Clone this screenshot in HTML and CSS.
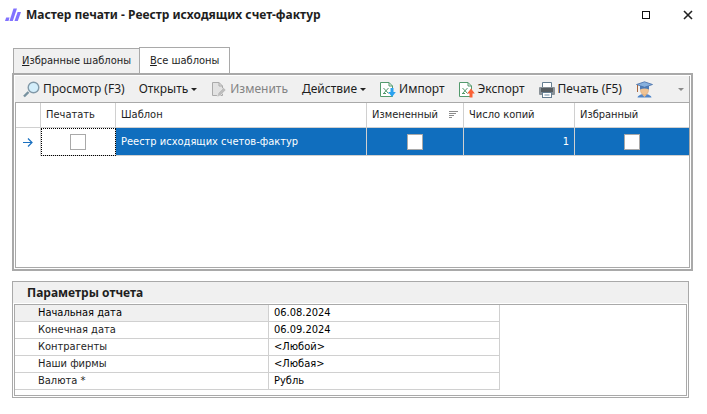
FILE: index.html
```html
<!DOCTYPE html>
<html lang="ru">
<head>
<meta charset="utf-8">
<title>Мастер печати - Реестр исходящих счет-фактур</title>
<link rel="stylesheet" href="styles.css">
</head>
<body>
<header class="titlebar">
  <svg class="logo" width="16" height="14" viewBox="0 0 16 14" aria-hidden="true"><g fill="#8272ff"><path d="M1.200 9.500H4.500L3.500 13H0Z" /><path d="M8.500 .500H12L7.800 13H4.500Z" /><path d="M12.600 4H16L12.800 13H9.500Z" /></g></svg>
  <h1 class="title">Мастер печати - Реестр исходящих счет-фактур</h1>
  <button class="winbtn" type="button" aria-label="Развернуть"><svg width="10" height="10" viewBox="0 0 10 10"><rect x="1.500" y="1.500" width="7" height="7" fill="none" stroke="#111" /></svg></button>
  <button class="winbtn" type="button" aria-label="Закрыть"><svg width="10" height="10" viewBox="0 0 10 10"><path d="M1 1L9 9M9 1L1 9" fill="none" stroke="#222" stroke-width="1.600" /></svg></button>
</header>
<main>
  <nav class="tabs" role="tablist">
    <button class="tab" type="button" role="tab" aria-selected="false"><u>И</u>збранные шаблоны</button>
    <button class="tab tab-active" type="button" role="tab" aria-selected="true"><u>В</u>се шаблоны</button>
  </nav>
  <section class="panel">
    <div class="toolbar" role="toolbar">
      <button class="tool" type="button">
        <svg width="17" height="17" viewBox="0 0 17 17"><path d="M1 15.500L5.500 11" stroke="#77919f" stroke-width="2.400" /><circle cx="10.500" cy="6.500" r="5.300" fill="#d3eefb" stroke="#8299a8" stroke-width="1.400" /></svg>
        Просмотр (F3)</button>
      <button class="tool tool-menu" type="button">Открыть<span class="caret"></span></button>
      <button class="tool" type="button" disabled>
        <svg width="16" height="17" viewBox="0 0 16 17"><path d="M1.500 1.500H8L11.500 5V14.500H1.500Z" fill="#e2e2e2" stroke="#aaa" /><path d="M8 1.500V5H11.500" fill="none" stroke="#aaa" /><path d="M6 16L7 12L12.500 6.500L15 9L9.500 14.500Z" fill="#bdbdbd" stroke="#efefef" stroke-width=".6" /></svg>
        Изменить</button>
      <button class="tool tool-menu" type="button">Действие<span class="caret"></span></button>
      <button class="tool" type="button">
        <svg width="16" height="17" viewBox="0 0 16 17"><path d="M.500 1.500H9L12.500 5V15.500H.500Z" fill="#fff" stroke="#539a6d" /><path d="M9 1.500V5H12.500" fill="none" stroke="#539a6d" /><path d="M3.500 7L8.500 12.500M8.500 7L3.500 12.500M3 12.500H6" fill="none" stroke="#539a6d" /><path d="M10.500 7H13.500V11H15.800L12 16L8.200 11H10.500Z" fill="#2ba2ef" /></svg>
        Импорт</button>
      <button class="tool" type="button">
        <svg width="16" height="17" viewBox="0 0 16 17"><path d="M.500 1.500H9L12.500 5V15.500H.500Z" fill="#fff" stroke="#539a6d" /><path d="M9 1.500V5H12.500" fill="none" stroke="#539a6d" /><path d="M3.500 7L8.500 12.500M8.500 7L3.500 12.500M3 12.500H6" fill="none" stroke="#539a6d" /><path d="M10.500 16.500H13.500V12.500H15.800L12 7.500L8.200 12.500H10.500Z" fill="#fa6136" /></svg>
        Экспорт</button>
      <button class="tool" type="button">
        <svg width="16" height="17" viewBox="0 0 16 17"><path d="M3.500 6V1.500H12.500V6" fill="#fff" stroke="#647d90" /><rect y="6" width="16" height="8" rx="1" fill="#8a9298" /><rect x="2" y="7" width="12" height="4" fill="#565c60" /><rect x="3.500" y="11.500" width="9" height="5" fill="#fff" stroke="#647d90" /><path d="M5.500 14H10.500" stroke="#6c8aa3" /></svg>
        Печать (F5)</button>
      <button class="tool" type="button" aria-label="Обучение">
        <svg width="17" height="17" viewBox="0 0 17 17"><path d="M1.500 16.500Q2 14 7 13H10Q15 14 15.500 16.500Z" fill="#5085c8" /><path d="M6.500 12H10.500V14L8.500 16L6.500 14Z" fill="#edbe8c" /><ellipse cx="8.500" cy="9" rx="4" ry="5" fill="#efc394" stroke="#cf9c72" stroke-width=".5" /><path d="M4 5H13V8.500Q8.500 6.500 4 8.500Z" fill="#4d7cb7" /><path d="M.500 3.500L8.500 .800L16.500 3.500L8.500 6.300Z" fill="#86b0de" stroke="#466fa8" stroke-width=".8" /><path d="M1.500 4V11" stroke="#a8653c" /></svg>
      </button>
      <button class="tool overflow" type="button" aria-label="Ещё"><span class="caret"></span></button>
    </div>
    <div class="grid-frame">
      <table class="grid">
        <colgroup><col class="c-mark"><col class="c-print"><col><col class="c-changed"><col class="c-copies"><col class="c-fav"></colgroup>
        <thead>
          <tr><th></th><th>Печатать</th><th>Шаблон</th><th><div class="sorted">Измененный<svg width="9" height="8" viewBox="0 0 9 8"><path d="M0 .500H9M0 2.500H7M0 4.500H5M0 6.500H3" stroke="#8b8b8b" /></svg></div></th><th>Число копий</th><th>Избранный</th></tr>
        </thead>
        <tbody>
          <tr>
            <td class="mark"><svg width="10" height="9" viewBox="0 0 10 9"><path d="M0 4.500H9M5 .500L9 4.500L5 8.500" fill="none" stroke="#1a70c0" stroke-width="1.200" /></svg></td>
            <td class="focused"><input type="checkbox" aria-label="Печатать"></td>
            <td>Реестр исходящих счетов-фактур</td>
            <td class="check"><input type="checkbox" aria-label="Измененный"></td>
            <td class="num">1</td>
            <td class="check"><input type="checkbox" aria-label="Избранный"></td>
          </tr>
        </tbody>
      </table>
    </div>
  </section>
  <section class="params">
    <h2 class="params-title">Параметры отчета</h2>
    <div class="params-frame">
      <table class="props">
        <tbody>
          <tr class="current"><th scope="row">Начальная дата</th><td>06.08.2024</td></tr>
          <tr><th scope="row">Конечная дата</th><td>06.09.2024</td></tr>
          <tr><th scope="row">Контрагенты</th><td>&lt;Любой&gt;</td></tr>
          <tr><th scope="row">Наши фирмы</th><td>&lt;Любая&gt;</td></tr>
          <tr><th scope="row">Валюта *</th><td>Рубль</td></tr>
        </tbody>
      </table>
    </div>
  </section>
</main>
</body>
</html>
```
FILE: styles.css
```css
* { box-sizing: border-box; }
body {
  margin: 0;
  background: #fff;
  color: #1e1e1e;
  font: 11px/16px "DejaVu Sans Condensed", "DejaVu Sans", sans-serif;
  font-stretch: condensed;
}
button {
  margin: 0;
  padding: 0;
  border: 0;
  background: none;
  color: inherit;
  font: inherit;
}
svg { display: block; flex: none; }

.titlebar {
  display: flex;
  align-items: center;
  height: 30px;
  padding: 0 14px 0 5px;
}
.title {
  flex: 1;
  margin: 0 0 0 5px;
  font: bold 12px/16px "Noto Sans", sans-serif;
}
.winbtn { margin-left: 32px; }

.tabs {
  display: flex;
  align-items: flex-end;
  margin: 17px 14px 0 13px;
}
.tab {
  height: 25px;
  padding: 0 8px;
  border: 1px solid #a9a9a9;
  border-bottom: 0;
  background: #f0f0f0;
}
.tab-active {
  height: 26px;
  padding: 0 10px;
  margin-left: -1px;
  background: #fff;
}

.panel {
  margin: 0 14px 0 12px;
  padding: 1px;
  border: 2px solid #a9a9a9;
}
.toolbar {
  display: flex;
  align-items: center;
  gap: 14px;
  height: 26px;
  padding: 0 5px 0 8px;
  border-right: 1px solid #a9a9a9;
  background: #f0f0f0;
  font: 12px/16px "Noto Sans", sans-serif;
}
.tool {
  display: flex;
  align-items: center;
  gap: 3px;
  white-space: nowrap;
}
.tool:disabled { color: #838383; }
.caret {
  border: 3px solid transparent;
  border-top-color: #222;
  border-bottom: 0;
}
.overflow { margin-left: auto; }
.overflow .caret { border-top-color: #8a8a8a; }

.grid-frame {
  min-height: 166px;
  border: 1px solid #a9a9a9;
}
.grid {
  width: 100%;
  border-collapse: separate;
  border-spacing: 0;
  table-layout: fixed;
}
.c-mark { width: 25px; }
.c-print { width: 75px; }
.c-changed { width: 97px; }
.c-copies { width: 111px; }
.c-fav { width: 114px; }
.grid th, .grid td {
  padding: 0 5px;
  border-right: 1px solid #d0d0d0;
  border-bottom: 1px solid #d0d0d0;
  text-align: left;
  font-weight: normal;
  white-space: nowrap;
}
.grid th:last-child, .grid td:last-child { border-right: 0; }
.grid th { height: 25px; }
.grid td {
  height: 28px;
  background: #106ebe;
  color: #fff;
}
.grid td.mark {
  padding: 0 7px;
  border-bottom: 0;
  background: #fff;
}
.grid td.focused {
  background: #fff;
  outline: 1px dotted #000;
  outline-offset: -1px;
}
.grid td.num { text-align: right; }
.sorted {
  display: flex;
  align-items: center;
  justify-content: space-between;
}
input[type="checkbox"] {
  display: block;
  appearance: none;
  width: 16px;
  height: 16px;
  margin: 0 auto;
  border: 1px solid #a9a9a9;
  background: #fff;
}

.params {
  margin: 10px 18px 0 12px;
  padding: 0 1px 1px;
  border: 1px solid #a9a9a9;
  background: linear-gradient(#f0f0f0 21px, #fff 21px);
}
.params-title {
  margin: 0;
  padding: 0 0 0 13px;
  font: bold 12px/22px "Noto Sans", sans-serif;
}
.params-frame {
  padding-bottom: 5px;
  border: 1px solid #a9a9a9;
  background: #fff;
}
.props {
  width: 485px;
  max-width: 100%;
  border-collapse: separate;
  border-spacing: 0;
  table-layout: fixed;
}
.props th, .props td {
  height: 17px;
  padding: 0 5px;
  border-right: 1px solid #d0d0d0;
  border-bottom: 1px solid #d0d0d0;
  text-align: left;
  font-weight: normal;
}
.props th {
  width: 254px;
  padding-left: 23px;
}
.props td { color: #000; }
.current th { background: #f0f0f0; color: #000; }
```
